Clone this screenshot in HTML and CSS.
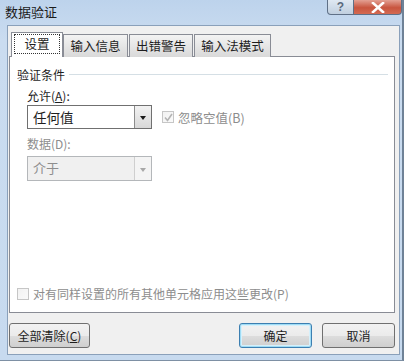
FILE: index.html
```html
<!DOCTYPE html>
<html lang="zh-CN">
<head>
    <meta charset="UTF-8">
    <title>数据验证</title>
    <link rel="stylesheet" href="styles.css">
</head>
<body>
    <div class="window">
        <div class="titlebar">
            <span class="title">数据验证</span>
            <div class="caption">
                <span class="cap-btn help">?</span>
                <span class="cap-btn close">
                    <svg width="14" height="11" viewBox="0 0 14 11"><path d="M2 1 L12 10 M12 1 L2 10" stroke="#fff" stroke-width="2.6" stroke-linecap="square"/></svg>
                </span>
            </div>
        </div>

        <div class="client">
            <div class="tabs">
                <div class="tab active"><span class="focus">设置</span></div>
                <div class="tab w1">输入信息</div>
                <div class="tab w2">出错警告</div>
                <div class="tab w3">输入法模式</div>
            </div>

            <div class="panel">
                <div class="group-title"><span>验证条件</span><i class="rule"></i></div>

                <div class="label">允许(<u>A</u>):</div>
                <div class="row">
                    <div class="combo">
                        <span class="value">任何值</span>
                        <span class="arrow"><i></i></span>
                    </div>
                    <label class="check disabled">
                        <span class="box ticked">
                            <svg width="9" height="9" viewBox="0 0 9 9"><path d="M1 4.5 L3.5 7.5 L8 1" fill="none" stroke="#b4b4b4" stroke-width="1.6"/></svg>
                        </span>
                        忽略空值(B)
                    </label>
                </div>

                <div class="label disabled">数据(D):</div>
                <div class="combo off">
                    <span class="value">介于</span>
                    <span class="arrow"><i></i></span>
                </div>

                <label class="check disabled apply">
                    <span class="box"></span>
                    对有同样设置的所有其他单元格应用这些更改(P)
                </label>
            </div>

            <div class="buttons">
                <button class="btn">全部清除(<u>C</u>)</button>
                <div class="right">
                    <button class="btn default">确定</button>
                    <button class="btn">取消</button>
                </div>
            </div>
        </div>
    </div>
</body>
</html>
```

FILE: styles.css
```css
body {
    margin: 0;
    font-family: "Noto Sans CJK SC", "Liberation Sans", sans-serif;
    font-size: 12px;
    color: #1e1e1e;
    background: #c3d7ed;
}
.window {
    width: 404px;
    height: 361px;
    display: flex;
    flex-direction: column;
    box-sizing: border-box;
    background: linear-gradient(#bdd3ec, #cadcf0 40px, #c7daef);
    border-right: 2px solid #6f8297;
    border-bottom: 1px solid #7e90a4;
}
.titlebar {
    height: 25px;
    display: flex;
    align-items: flex-start;
    flex-shrink: 0;
}
.title {
    padding: 3px 0 0 5px;
    font-size: 13px;
    line-height: 18px;
    color: #1b1b1b;
}
.caption {
    margin-left: auto;
    display: flex;
}
.cap-btn {
    height: 15px;
    display: flex;
    align-items: center;
    justify-content: center;
    box-sizing: border-box;
    border: 1px solid #5f7087;
    border-top: none;
}
.help {
    width: 27px;
    border-radius: 0 0 0 4px;
    background: linear-gradient(#dfe8f2, #c0cfdf);
    color: #5a6a7e;
    font-family: "Liberation Sans", sans-serif;
    font-weight: bold;
    font-size: 12px;
}
.close {
    width: 48px;
    border-left: none;
    border-radius: 0 0 4px 0;
    background: linear-gradient(#e3a093, #c8553f 55%, #d46a52);
}
.client {
    flex: 1;
    margin: 0 2px 5px 7px;
    background: #f0f0f0;
    border: 1px solid #8aa0ba;
    padding: 6px 4px 0 1px;
    display: flex;
    flex-direction: column;
}
.tabs {
    display: flex;
    align-items: flex-end;
    height: 25px;
    padding-left: 2px;
    position: relative;
    z-index: 1;
}
.tab {
    height: 23px;
    box-sizing: border-box;
    border: 1px solid #898c95;
    border-bottom: none;
    background: linear-gradient(#f3f3f3, #e6e6e6 50%, #d9d9d9);
    display: flex;
    align-items: center;
    justify-content: center;
    font-size: 12.5px;
    margin-right: 1px;
    padding-bottom: 2px;
}
.tab.active {
    width: 52px;
    height: 25px;
    background: #fff;
    margin-right: 0;
    padding-bottom: 3px;
}
.focus {
    display: block;
    width: 46px;
    height: 20px;
    line-height: 18px;
    text-align: center;
    box-sizing: border-box;
    border: 1px dotted #333;
}
.w1 { width: 65px; }
.w2 { width: 64px; }
.w3 { width: 77px; }

.panel {
    height: 257px;
    box-sizing: border-box;
    margin-top: -1px;
    background: #fff;
    border: 1px solid #898c95;
    padding: 9px 6px 10px 7px;
    display: flex;
    flex-direction: column;
}
.group-title {
    display: flex;
    align-items: center;
    height: 16px;
}
.rule {
    flex: 1;
    height: 1px;
    background: #d5dfe5;
    margin: 1px 0 0 4px;
}
.label {
    margin: 5px 0 0 10px;
    height: 17px;
    line-height: 17px;
}
.label.disabled { margin-top: 6px; color: #8d8d8d; }
.row {
    display: flex;
    align-items: center;
    margin-top: 1px;
}
.combo {
    width: 125px;
    height: 24px;
    margin-left: 10px;
    box-sizing: border-box;
    border: 1px solid #707070;
    background: #fff;
    display: flex;
    align-items: stretch;
}
.combo .value {
    flex: 1;
    padding-left: 5px;
    font-size: 13.5px;
    line-height: 22px;
}
.combo .arrow {
    width: 16px;
    border-left: 1px solid #8c8c8c;
    background: linear-gradient(#f2f2f2, #d8d8d8);
    display: flex;
    align-items: center;
    justify-content: center;
}
.combo .arrow i {
    width: 0;
    height: 0;
    border-left: 3.5px solid transparent;
    border-right: 3.5px solid transparent;
    border-top: 4px solid #1a1a1a;
    margin-top: 2px;
}
.combo.off {
    margin-top: 4px;
    height: 25px;
    border-color: #b4b7ba;
    background: #f0f0f0;
}
.combo.off .value { color: #8d8d8d; font-size: 13px; }
.combo.off .arrow {
    border-left-color: #cfcfcf;
    background: #f4f4f4;
}
.combo.off .arrow i { border-top-color: #a8a8a8; }

.check {
    display: flex;
    align-items: center;
    gap: 4px;
    font-size: 12.5px;
}
.row .check { margin-left: 10px; }
.check.disabled { color: #8d8d8d; }
.box {
    width: 12px;
    height: 12px;
    box-sizing: border-box;
    border: 1px solid #c6c6c6;
    background: linear-gradient(135deg, #f2f2f2, #fafafa);
    display: flex;
    align-items: center;
    justify-content: center;
}
.apply {
    margin-top: auto;
    font-size: 12px;
}

.buttons {
    display: flex;
    justify-content: space-between;
    margin-top: 10px;
}
.right {
    display: flex;
    gap: 10px;
}
.btn {
    height: 25px;
    width: 73px;
    box-sizing: border-box;
    border: 1px solid #707070;
    border-radius: 3px;
    background: linear-gradient(#f2f2f2, #ebebeb 50%, #dddddd 51%, #cfcfcf);
    font-family: inherit;
    font-size: 12px;
    color: #1e1e1e;
    padding: 0;
}
.buttons > .btn { width: 81px; }
.btn.default {
    border-color: #3c7fb1;
    box-shadow: inset 0 0 0 1px #9fdcf5, inset 0 0 0 2px #d6f0fb;
    background: linear-gradient(#f2f2f2, #ebebeb 50%, #dddddd 51%, #cfcfcf);
}
```
